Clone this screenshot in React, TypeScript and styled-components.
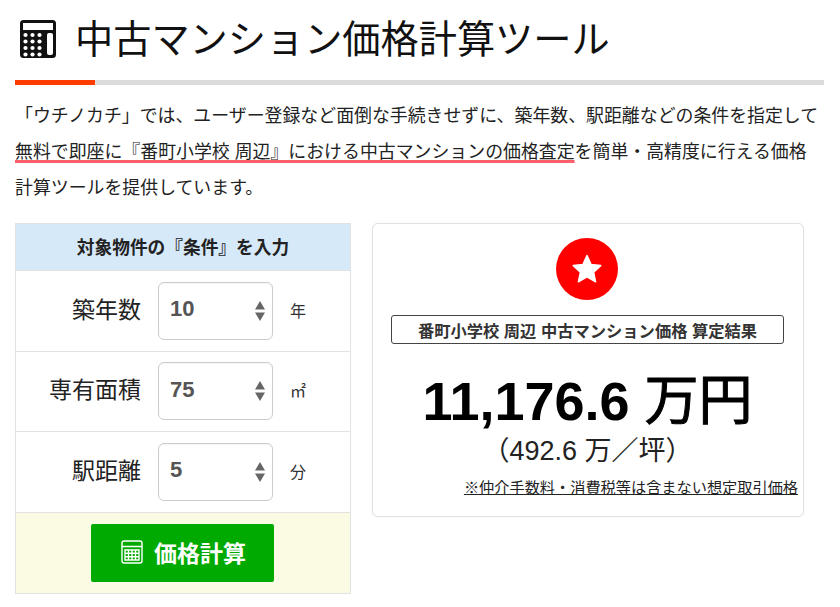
import React from 'react';
import styled, { createGlobalStyle } from 'styled-components';

const GlobalStyle = createGlobalStyle`
  html, body {
    margin: 0;
    padding: 0;
    background: #fff;
    color: #222;
    font-family: "Liberation Sans", "Noto Sans CJK JP", sans-serif;
  }
`;

// Styles
const Page = styled.div`
  width: 809px;
  padding: 0 0 13px 15px;
`;

const Heading = styled.h1`
  display: flex;
  align-items: center;
  gap: 18px;
  height: 80px;
  margin: 0;
  padding: 0 0 7px 4px;
  box-sizing: border-box;
  font-size: 38.2px;
  font-weight: 400;
  color: #111;
`;

const HeadingIcon = styled.svg`
  margin-top: 5px;
`;

const Rule = styled.div`
  height: 5px;
  background: #dcdcdc;
  &:before {
    content: '';
    display: block;
    width: 80px;
    height: 5px;
    background: #ff3c00;
  }
`;

const Lead = styled.p`
  margin: 13px 0 17px;
  font-size: 17.9px;
  line-height: 36px;
  color: #222;
  white-space: nowrap;
`;

const Marker = styled.span`
  text-decoration: underline;
  text-decoration-color: #ff5f6a;
  text-decoration-thickness: 3px;
  text-underline-offset: 2px;
  text-decoration-skip-ink: none;
`;

const Columns = styled.div`
  display: flex;
  align-items: flex-start;
  gap: 21px;
`;

const FormTable = styled.div`
  width: 336px;
  box-sizing: border-box;
  border: 1px solid #e2e2e2;
`;

const FormTitle = styled.div`
  height: 46px;
  padding-bottom: 3px;
  box-sizing: border-box;
  display: flex;
  align-items: center;
  justify-content: center;
  background: #d6e9f8;
  font-size: 17.7px;
  font-weight: 700;
  color: #222;
`;

const Row = styled.div`
  height: 80.5px;
  box-sizing: border-box;
  border-top: 1px solid #e2e2e2;
  display: flex;
  align-items: center;
`;

const RowLabel = styled.div`
  width: 125px;
  padding-bottom: 6px;
  text-align: right;
  font-size: 23px;
  color: #222;
`;

const NumberField = styled.div`
  width: 115px;
  height: 58px;
  margin-left: 17px;
  padding: 0 6px 0 11px;
  box-sizing: border-box;
  border: 1px solid #ccc;
  border-radius: 6px;
  display: flex;
  align-items: center;
  justify-content: space-between;
  font-size: 22px;
  font-weight: 700;
  color: #555;
  box-shadow: inset 0 1px 1px rgba(0, 0, 0, 0.04);
`;

const FieldValue = styled.span`
  padding-bottom: 3px;
`;

const Unit = styled.div`
  margin-left: 17px;
  padding-bottom: 2px;
  font-size: 16px;
  color: #333;
`;

const FormFooter = styled.div`
  height: 81.5px;
  box-sizing: border-box;
  border-top: 1px solid #e2e2e2;
  background: #fbfbe3;
  display: flex;
  align-items: center;
  justify-content: center;
`;

const SubmitButton = styled.button`
  width: 183px;
  height: 58.5px;
  margin-right: 1px;
  padding: 0 0 2px 2px;
  border: none;
  border-radius: 2px;
  background: #00aa00;
  color: #fff;
  font-family: inherit;
  font-size: 23px;
  font-weight: 700;
  display: flex;
  align-items: center;
  justify-content: center;
  gap: 11px;
`;

const ResultCard = styled.div`
  width: 432px;
  height: 294px;
  box-sizing: border-box;
  border: 1px solid #e2e2e2;
  border-radius: 6px;
  box-shadow: 0 0 1px #ddd;
  padding: 14px 19px 0 18px;
  display: flex;
  flex-direction: column;
  align-items: center;
`;

const Badge = styled.div`
  width: 62px;
  height: 62px;
  margin-right: 1px;
  border-radius: 50%;
  background: #ff0000;
  display: flex;
  align-items: center;
  justify-content: center;
`;

const ResultTitle = styled.div`
  width: 100%;
  height: 29px;
  margin-top: 15px;
  box-sizing: border-box;
  border: 1px solid #444;
  border-radius: 3px;
  display: flex;
  align-items: center;
  justify-content: center;
  font-size: 16.3px;
  font-weight: 700;
  color: #333;
`;

const Price = styled.div`
  margin-top: 27px;
  font-size: 54px;
  line-height: 60px;
  font-weight: 700;
  color: #000;
  white-space: nowrap;
`;

const PriceKanji = styled.span`
  font-weight: 400;
  -webkit-text-stroke: 1px #000;
`;

const PerTsubo = styled.div`
  margin-top: 3px;
  font-size: 27px;
  line-height: 34px;
  color: #222;
  white-space: nowrap;
`;

const Note = styled.div`
  align-self: flex-end;
  margin: 10px -14px 0 0;
  font-size: 15.2px;
  line-height: 20px;
  color: #222;
  text-decoration: underline;
  white-space: nowrap;
`;

const CalculatorIcon: React.FC = () => (
  <HeadingIcon width="38" height="40" viewBox="0 0 38 40">
    <rect x="1" y="1" width="36" height="38" rx="3.5" fill="#111" />
    <rect x="4" y="4" width="30" height="7" fill="#fff" />
    {[0, 1, 2, 3].flatMap((r) =>
      [0, 1, 2].map((c) => (
        <circle key={`${r}-${c}`} cx={6.5 + c * 7} cy={16 + r * 6.5} r="2.1" fill="#fff" />
      )),
    )}
    <rect x="28" y="14" width="6" height="22" rx="2" fill="#fff" />
  </HeadingIcon>
);

const ButtonIcon: React.FC = () => (
  <svg width="22" height="24" viewBox="0 0 22 24" fill="none" stroke="#fff" strokeWidth="1.4">
    <rect x="1" y="1" width="20" height="22" rx="2" />
    <path d="M1 6.5h20M4 10h14v10H4zM4 13.3h14M4 16.7h14M7.5 10v10M11 10v10M14.5 10v10" />
  </svg>
);

const SpinArrows: React.FC = () => (
  <svg width="12" height="20" viewBox="0 0 12 20" fill="#666">
    <path d="M6 0l5 8.5H1zM6 20l-5-8.5h10z" />
  </svg>
);

const StarIcon: React.FC = () => (
  <svg width="34" height="34" viewBox="0 0 34 34">
    <path
      d="M17 3.5l4.1 9 9.6 1.1-7.1 6.6 2 9.6-8.6-4.9-8.6 4.9 2-9.6-7.1-6.6 9.6-1.1z"
      fill="#fff"
      stroke="#fff"
      strokeLinejoin="round"
      strokeWidth="1.5"
    />
  </svg>
);

const fields = [
  { label: '築年数', value: '10', unit: '年' },
  { label: '専有面積', value: '75', unit: '㎡' },
  { label: '駅距離', value: '5', unit: '分' },
];

const App: React.FC = () => {
  return (
    <Page>
      <GlobalStyle />
      <Heading>
        <CalculatorIcon />
        中古マンション価格計算ツール
      </Heading>
      <Rule />
      <Lead>
        「ウチノカチ」では、ユーザー登録など面倒な手続きせずに、築年数、駅距離などの条件を指定して
        <br />
        <Marker>無料で即座に『番町小学校 周辺』における中古マンションの価格査定</Marker>
        を簡単・高精度に行える価格
        <br />
        計算ツールを提供しています。
      </Lead>

      <Columns>
        <FormTable>
          <FormTitle>対象物件の『条件』を入力</FormTitle>
          {fields.map((f) => (
            <Row key={f.label}>
              <RowLabel>{f.label}</RowLabel>
              <NumberField>
                <FieldValue>{f.value}</FieldValue>
                <SpinArrows />
              </NumberField>
              <Unit>{f.unit}</Unit>
            </Row>
          ))}
          <FormFooter>
            <SubmitButton type="button">
              <ButtonIcon />
              価格計算
            </SubmitButton>
          </FormFooter>
        </FormTable>

        <ResultCard>
          <Badge>
            <StarIcon />
          </Badge>
          <ResultTitle>番町小学校 周辺 中古マンション価格 算定結果</ResultTitle>
          <Price>
            11,176.6 <PriceKanji>万円</PriceKanji>
          </Price>
          <PerTsubo>（492.6 万／坪）</PerTsubo>
          <Note>※仲介手数料・消費税等は含まない想定取引価格</Note>
        </ResultCard>
      </Columns>
    </Page>
  );
};

export default App;
